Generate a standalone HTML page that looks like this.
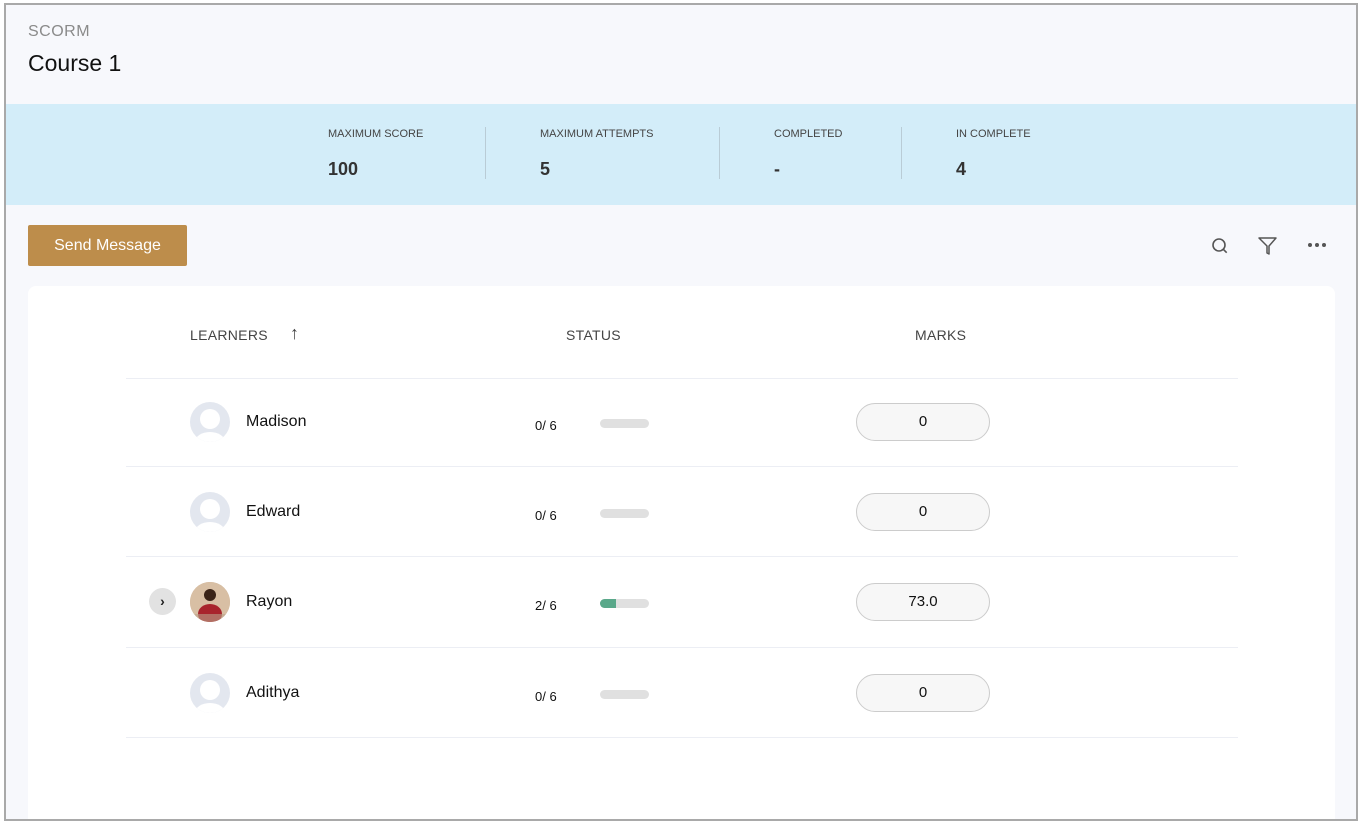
<!DOCTYPE html>
<html><head><style>
*{box-sizing:border-box;margin:0;padding:0}
body{width:1364px;height:828px;background:#fff;font-family:"Liberation Sans",sans-serif;position:relative;overflow:hidden}
.frame{position:absolute;left:4px;top:3px;width:1354px;height:818px;border:2px solid #a9a9a9;background:#f7f8fc;overflow:hidden}
.a{position:absolute}
.hdr{left:22px;top:18px;font-size:16px;color:#8a8a8a;letter-spacing:.5px}
.title{left:22px;top:45px;font-size:23px;color:#111}
.band{left:0;top:99px;width:100%;height:101px;background:#d3edf9}
.lbl{font-size:11px;color:#444;top:123px}
.val{font-size:18px;font-weight:bold;color:#333;top:154px}
.sep{width:1px;height:52px;background:#b9ccd6;top:122px}
.btn{left:22px;top:220px;width:159px;height:41px;background:#bd8d4b;border-radius:2px;color:#fff;font-size:16px;text-align:center;line-height:41px}
.card{left:22px;top:281px;width:1307px;height:540px;background:#fff;border-radius:8px}
.th{font-size:14px;color:#444;top:322px;letter-spacing:.3px}
.line{height:1px;background:#eceef4;left:120px;width:1112px}
.av{width:40px;height:40px;border-radius:50%;background:#e3e7ef;overflow:hidden;left:184px}
.name{left:240px;font-size:16px;color:#111}
.frac{left:529px;font-size:13px;color:#111}
.bar{left:594px;width:49px;height:9px;border-radius:5px;background:#e0e0e0;overflow:hidden}
.mk{left:850px;width:134px;height:38px;border:1px solid #ccc;border-radius:19px;background:#f7f7f7;text-align:center;line-height:36px;font-size:15px;color:#111}
</style></head><body>
<div class="frame">
<div class="a hdr">SCORM</div>
<div class="a title">Course 1</div>
<div class="a band"></div>
<div class="a lbl" style="left:322px">MAXIMUM SCORE</div><div class="a val" style="left:322px">100</div>
<div class="a sep" style="left:479px"></div>
<div class="a lbl" style="left:534px">MAXIMUM ATTEMPTS</div><div class="a val" style="left:534px">5</div>
<div class="a sep" style="left:713px"></div>
<div class="a lbl" style="left:768px">COMPLETED</div><div class="a val" style="left:768px">-</div>
<div class="a sep" style="left:895px"></div>
<div class="a lbl" style="left:950px">IN COMPLETE</div><div class="a val" style="left:950px">4</div>
<div class="a btn">Send Message</div>
<svg class="a" style="left:1204px;top:231px" width="20" height="20" viewBox="0 0 20 20" fill="none" stroke="#555" stroke-width="1.6"><circle cx="9" cy="9" r="6"/><path d="M13.2 13.2l3.5 3.5"/></svg>
<svg class="a" style="left:1251px;top:230px" width="22" height="22" viewBox="0 0 22 22" fill="none" stroke="#555" stroke-width="1.5" stroke-linejoin="round"><path d="M2 3h17l-7 8v8l-2-1v-7z"/></svg>
<svg class="a" style="left:1300px;top:236px" width="22" height="8" viewBox="0 0 22 8" fill="#555"><circle cx="4" cy="4" r="2"/><circle cx="11" cy="4" r="2"/><circle cx="18" cy="4" r="2"/></svg>
<div class="a card"></div>
<div class="a th" style="left:184px">LEARNERS</div>
<div class="a th" style="left:284px;top:318px;font-size:18px">↑</div>
<div class="a th" style="left:560px">STATUS</div>
<div class="a th" style="left:909px">MARKS</div>
<div class="a line" style="top:373px"></div>
<div class="a line" style="top:461px"></div>
<div class="a line" style="top:551px"></div>
<div class="a line" style="top:642px"></div>
<div class="a line" style="top:732px"></div>

<div class="a av" style="top:397px"><svg width="40" height="40"><circle cx="20" cy="17" r="10" fill="#fff"/><ellipse cx="20" cy="40" rx="15" ry="10" fill="#fff"/></svg></div>
<div class="a name" style="top:408px">Madison</div>
<div class="a frac" style="top:413px">0/ 6</div>
<div class="a bar" style="top:414px"></div>
<div class="a mk" style="top:398px">0</div>

<div class="a av" style="top:487px"><svg width="40" height="40"><circle cx="20" cy="17" r="10" fill="#fff"/><ellipse cx="20" cy="40" rx="15" ry="10" fill="#fff"/></svg></div>
<div class="a name" style="top:498px">Edward</div>
<div class="a frac" style="top:503px">0/ 6</div>
<div class="a bar" style="top:504px"></div>
<div class="a mk" style="top:488px">0</div>

<div class="a" style="left:143px;top:583px;width:27px;height:27px;border-radius:50%;background:#e2e2e2;text-align:center;line-height:26px;font-size:14px;font-weight:bold;color:#222">›</div>
<div class="a av" style="top:577px;background:#c9a98a"><svg width="40" height="40"><rect width="40" height="40" fill="#d8bfa4"/><circle cx="20" cy="13" r="6" fill="#3a2418"/><ellipse cx="20" cy="32" rx="12" ry="10" fill="#a8242c"/><rect y="32" width="40" height="8" fill="#b9a28a" opacity=".6"/></svg></div>
<div class="a name" style="top:588px">Rayon</div>
<div class="a frac" style="top:593px">2/ 6</div>
<div class="a bar" style="top:594px"><div style="width:16px;height:9px;background:#5aa88a"></div></div>
<div class="a mk" style="top:578px">73.0</div>

<div class="a av" style="top:668px"><svg width="40" height="40"><circle cx="20" cy="17" r="10" fill="#fff"/><ellipse cx="20" cy="40" rx="15" ry="10" fill="#fff"/></svg></div>
<div class="a name" style="top:679px">Adithya</div>
<div class="a frac" style="top:684px">0/ 6</div>
<div class="a bar" style="top:685px"></div>
<div class="a mk" style="top:669px">0</div>
</div>
</body></html>
